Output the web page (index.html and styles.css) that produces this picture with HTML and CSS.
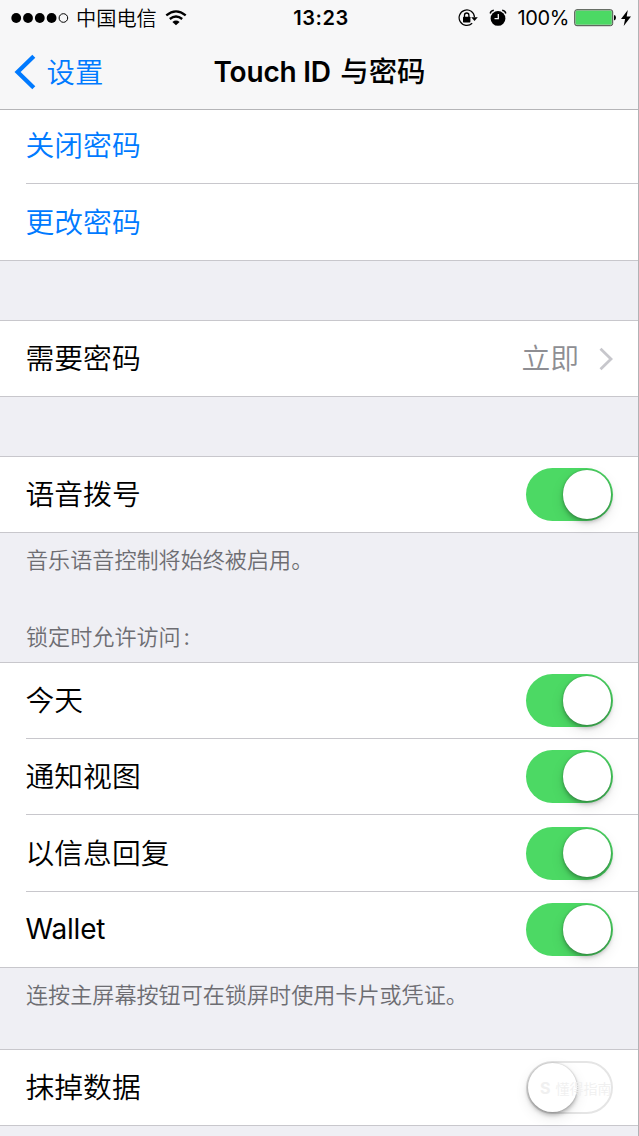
FILE: index.html
```html
<!DOCTYPE html>
<html lang="zh-CN">
<head>
<meta charset="utf-8">
<title>Touch ID 与密码</title>
<link rel="stylesheet" href="styles.css">
</head>
<body>
<div class="screen">
  <header class="header">
    <div class="status">
      <div class="status-left">
        <svg class="signal" width="59" height="12" viewBox="0 0 59 12"><circle cx="5.2" cy="6" r="4.9"/><circle cx="17" cy="6" r="4.9"/><circle cx="28.8" cy="6" r="4.9"/><circle cx="40.6" cy="6" r="4.9"/><circle cx="52.4" cy="6" r="4.3" fill="none" stroke="#000"/></svg>
        <span class="carrier">中国电信</span>
        <svg class="wifi" width="22" height="16" viewBox="0 0 22 16"><g fill="none" stroke="#000" stroke-width="2.3"><path d="M1.3 5.4Q11-2.6 20.7 5.4"/><path d="M4.8 9Q11 4 17.2 9"/></g><path d="M7.4 11.9Q11 9.2 14.6 11.9L11 15.2Z"/></svg>
      </div>
      <span class="clock">13:23</span>
      <div class="status-right">
        <svg class="lock" width="20" height="18" viewBox="0 0 20 18"><path d="M14.2 14.2A7.7 7.7 0 1 1 16.5 8.2" fill="none" stroke="#000" stroke-width="1.2"/><path d="M13.2 8.2H19.8L16.5 12Z"/><rect x="5" y="7.7" width="7.4" height="5.7" rx=".6"/><path d="M6.5 8V6.2a2.2 2.2 0 0 1 4.4 0V8" fill="none" stroke="#000" stroke-width="1.3"/></svg>
        <svg class="alarm" width="18" height="18" viewBox="0 0 18 18"><circle cx="9" cy="9.4" r="7.4"/><path d="M1.2 4.5Q1.7 1.8 4.8 1.3M13.2 1.3Q16.3 1.8 16.8 4.5" fill="none" stroke="#000" stroke-width="1.4"/><path d="M9.3 5V9.6H5.5" fill="none" stroke="#f7f7f8" stroke-width="1.3"/></svg>
        <span class="percent">100%</span>
        <svg class="battery" width="43" height="18" viewBox="0 0 43 18"><rect x=".7" y=".7" width="38" height="16" rx="2.2" fill="#a9c9ac" stroke="#4b5149"/><rect x="1.8" y="1.8" width="35.8" height="13.8" rx="1" fill="#4cd964"/><path d="M40 6Q42 6.4 42 8.7T40 11.4Z"/></svg>
        <svg class="bolt" width="10" height="16" viewBox="0 0 10 16"><path d="M6.8 0L0 9H4.1L2.7 16L10 6.4H5.7Z"/></svg>
      </div>
    </div>
    <nav class="nav">
      <a class="back"><svg width="22" height="36" viewBox="0 0 22 36"><path d="M19.8 2.3L3.6 18L19.8 33.7" fill="none" stroke="#007aff" stroke-width="4.3"/></svg><span>设置</span></a>
      <h1 class="title"><span class="latin">Touch ID</span> 与密码</h1>
    </nav>
  </header>
  <main>
    <section class="group group-first">
      <div class="row action"><span>关闭密码</span></div>
      <div class="row action"><span>更改密码</span></div>
    </section>
    <section class="group gap">
      <div class="row"><span>需要密码</span><div class="value"><span>立即</span><svg width="14" height="24" viewBox="0 0 14 24"><path d="M1.5 1.7L12 12L1.5 22.3" fill="none" stroke="#c7c7cc" stroke-width="2.8"/></svg></div></div>
    </section>
    <section class="group gap">
      <div class="row"><span>语音拨号</span><div class="switch on"></div></div>
    </section>
    <p class="note note-voice">音乐语音控制将始终被启用。</p>
    <p class="note note-locked">锁定时允许访问<span class="colon">:</span></p>
    <section class="group">
      <div class="row"><span>今天</span><div class="switch on"></div></div>
      <div class="row short"><span>通知视图</span><div class="switch on"></div></div>
      <div class="row"><span>以信息回复</span><div class="switch on"></div></div>
      <div class="row short"><span class="wallet">Wallet</span><div class="switch on"></div></div>
    </section>
    <p class="note note-wallet">连按主屏幕按钮可在锁屏时使用卡片或凭证。</p>
    <section class="group">
      <div class="row"><span>抹掉数据</span><div class="switch"><div class="watermark"><b>S</b>懂得指南</div></div></div>
    </section>
  </main>
</div>
</body>
</html>
```
FILE: styles.css
```css
* { box-sizing: border-box; }
body { margin: 0; }
.screen {
  height: 1136px;
  overflow: hidden;
  position: relative;
  background: #efeff4;
  color: #000;
  font-family: "Noto Sans CJK SC", sans-serif;
  font-size: 28.8px;
  font-weight: 350;
  line-height: 40px;
}
.screen::after {
  content: "";
  position: absolute;
  top: 0; right: 0; bottom: 0;
  width: 1px;
  background: #b2b2b5;
}
svg { display: block; flex: none; }
.header { height: 110px; background: #f7f7f8; border-bottom: 1px solid #b5b5b8; }
.status {
  height: 35px;
  display: grid;
  grid-template-columns: 1fr auto 1fr;
  align-items: center;
  padding: 0 8px 0 11px;
  font-size: 20px;
  line-height: 35px;
}
.status-left, .status-right { display: flex; align-items: center; }
.status-right { justify-content: flex-end; }
.carrier { margin-left: 6px; font-size: 20.2px; padding-bottom: 1px; }
.wifi { margin-left: 8px; }
.clock { font-family: Inter, sans-serif; font-weight: 600; font-size: 20px; letter-spacing: .6px; padding-top: 1px; }
.alarm { margin-left: 11px; }
.percent { margin: 0 5px 0 11px; padding-top: 1px; font-family: Inter, sans-serif; font-weight: 400; font-size: 20px; letter-spacing: -.4px; }
.bolt { margin-left: 4px; }
.nav { height: 74px; display: flex; align-items: center; padding-left: 14px; }
.back { width: 199.5px; display: flex; align-items: center; gap: 10.5px; color: #007aff; font-size: 28.4px; }
.back span, .title { padding-bottom: 2px; }
.title { margin: 0; font-size: 28.4px; font-weight: 500; white-space: nowrap; }
.latin { font-family: Inter, sans-serif; font-weight: 600; font-size: 28px; letter-spacing: -.2px; margin-right: 3px; }
.group { background: #fff; border: solid #c8c7cc; border-width: 1px 0; }
.group-first { border-top: 0; padding-bottom: 1px; }
.gap { margin-top: 59px; }
.row { height: 75px; padding-right: 26px; margin-left: 26px; display: flex; align-items: center; justify-content: space-between; }
.row span { margin-left: -.5px; padding-bottom: 3px; }
.row + .row { height: 77px; border-top: 1px solid #c8c7cc; }
.row + .short { height: 76px; }
.group-first .row:first-child { height: 73px; padding-bottom: 2px; }
.group-first .row + .row { height: 76px; }
.group-first .row + .row span { padding-bottom: 1px; }
.action { color: #007aff; }
.value { display: flex; align-items: center; gap: 20px; color: #8e8e93; }
.switch {
  position: relative;
  width: 87px;
  height: 53px;
  border-radius: 27px;
  border: 2.5px solid #e5e5e5;
  background: #fff;
}
.switch::before {
  content: "";
  display: block;
  width: 49px;
  height: 49px;
  border-radius: 50%;
  background: #fff;
  box-shadow: 0 3px 4px rgba(0,0,0,.25), 0 5px 14px rgba(0,0,0,.1), 0 0 2px rgba(0,0,0,.25);
}
.switch.on { border: 0; padding: 2px 2px 2px 36.5px; background: #4cd964; }
.switch.on::before { width: 48.5px; height: 48.5px; }
.row .wallet { font-family: Inter, sans-serif; font-size: 28px; font-weight: 400; letter-spacing: -.2px; padding-bottom: 1px; }
.note { margin: 0; padding-left: 26px; font-size: 22.1px; line-height: 32px; color: #6d6d72; }
.note-voice { padding-top: 9px; height: 86px; }
.note-locked { height: 43px; }
.colon { margin-left: 3px; }
.note-wallet { padding-top: 9px; height: 81px; }
.watermark {
  position: absolute;
  left: 12px;
  top: 13px;
  display: flex;
  gap: 5px;
  align-items: center;
  font-size: 14px;
  line-height: 24px;
  color: #f0f0f0;
  white-space: nowrap;
}
.watermark b { font-family: Inter, sans-serif; font-size: 16px; }
```
